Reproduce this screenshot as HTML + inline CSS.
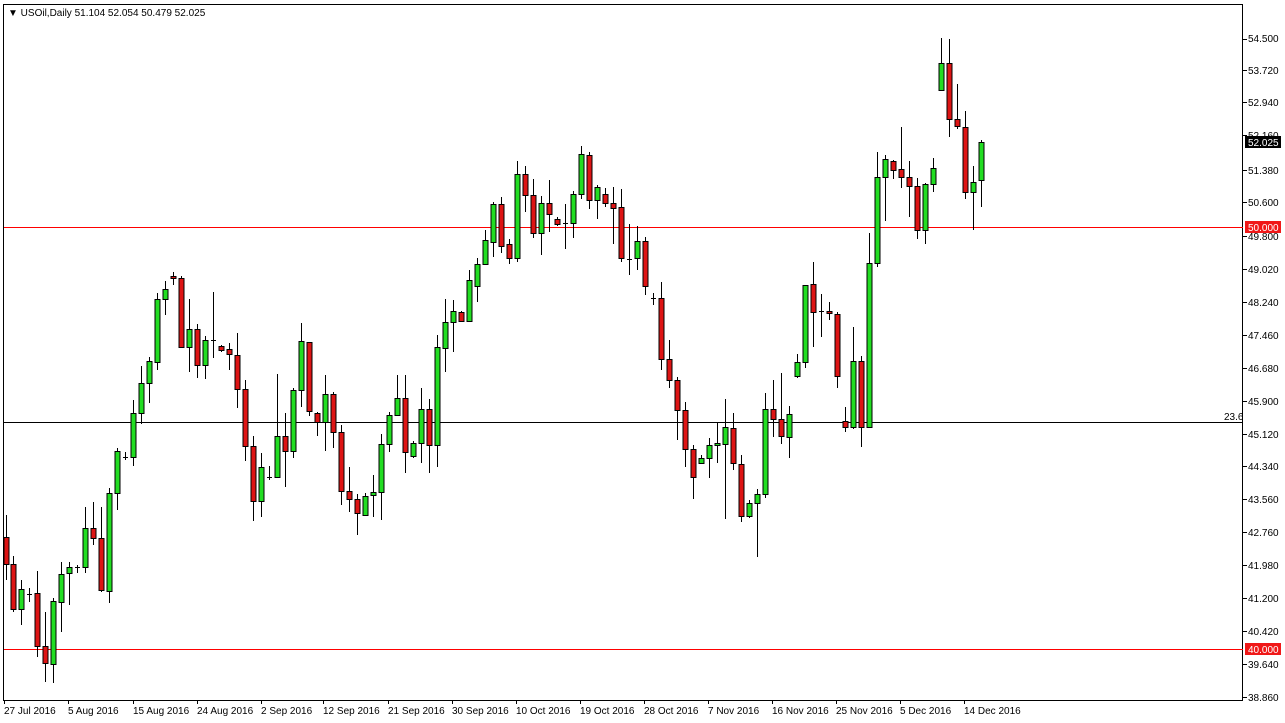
<!DOCTYPE html>
<html><head><meta charset="utf-8"><style>
html,body{margin:0;padding:0;background:#fff;width:1285px;height:723px;overflow:hidden}
svg{position:absolute;left:0;top:0}
text{font-family:"Liberation Sans",sans-serif;font-size:10px;fill:#000}
</style></head><body>
<svg id="s" width="1285" height="723" xmlns="http://www.w3.org/2000/svg">
<rect x="0" y="0" width="1285" height="723" fill="#fff"/>
<rect x="3.5" y="4.5" width="1239" height="696" fill="none" stroke="#000" stroke-width="1"/>
<rect x="4" y="227" width="1239" height="1" fill="#ff0000"/>
<rect x="4" y="649" width="1239" height="1" fill="#ff0000"/>
<rect x="4" y="422" width="1239" height="1" fill="#000"/>
<text x="1224" y="420">23.6</text>
<text x="8" y="16">▼ USOil,Daily  51.104 52.054 50.479 52.025</text>
<g id="c"></g>
<g id="ax"></g>
<rect x="1245" y="136" width="36" height="12" fill="#000"/>
<text x="1248" y="146" style="fill:#fff">52.025</text>
<rect x="1245" y="221" width="36" height="12" fill="#f01818"/>
<text x="1248" y="231" style="fill:#fff">50.000</text>
<rect x="1245" y="643" width="36" height="12" fill="#f01818"/>
<text x="1248" y="653" style="fill:#fff">40.000</text>
<text x="4" y="714">27 Jul 2016</text>
<text x="68" y="714">5 Aug 2016</text>
<text x="133" y="714">15 Aug 2016</text>
<text x="197" y="714">24 Aug 2016</text>
<text x="261" y="714">2 Sep 2016</text>
<text x="323" y="714">12 Sep 2016</text>
<text x="388" y="714">21 Sep 2016</text>
<text x="452" y="714">30 Sep 2016</text>
<text x="516" y="714">10 Oct 2016</text>
<text x="580" y="714">19 Oct 2016</text>
<text x="644" y="714">28 Oct 2016</text>
<text x="708" y="714">7 Nov 2016</text>
<text x="772" y="714">16 Nov 2016</text>
<text x="836" y="714">25 Nov 2016</text>
<text x="900" y="714">5 Dec 2016</text>
<text x="964" y="714">14 Dec 2016</text>
<text x="1248" y="42">54.500</text>
<text x="1248" y="74">53.720</text>
<text x="1248" y="106">52.940</text>
<text x="1248" y="139">52.160</text>
<text x="1248" y="174">51.380</text>
<text x="1248" y="206">50.600</text>
<text x="1248" y="240">49.800</text>
<text x="1248" y="273">49.020</text>
<text x="1248" y="306">48.240</text>
<text x="1248" y="339">47.460</text>
<text x="1248" y="372">46.680</text>
<text x="1248" y="405">45.900</text>
<text x="1248" y="438">45.120</text>
<text x="1248" y="470">44.340</text>
<text x="1248" y="503">43.560</text>
<text x="1248" y="536">42.760</text>
<text x="1248" y="569">41.980</text>
<text x="1248" y="602">41.200</text>
<text x="1248" y="635">40.420</text>
<text x="1248" y="668">39.640</text>
<text x="1248" y="701">38.860</text>
</svg>
<script>
var d=[
[6,515,580,537,564,'r'],[13,556,612,564,609,'r'],[21,580,625,589,609,'g'],[29,588,602,594,594,'d'],
[37,571,657,593,646,'r'],[45,612,682,646,663,'r'],[53,598,683,601,664,'g'],[61,562,632,574,602,'g'],
[69,562,605,567,573,'g'],[77,565,573,567,567,'d'],[85,507,573,528,567,'g'],[93,502,545,528,538,'r'],
[101,507,592,538,590,'r'],[109,488,603,493,591,'g'],[117,448,510,451,493,'g'],[125,452,460,457,457,'d'],
[133,400,466,413,457,'g'],[141,366,424,383,413,'g'],[149,357,403,361,383,'g'],[157,293,370,299,362,'g'],
[165,281,315,289,299,'g'],[173,272,285,276,278,'r'],[181,276,347,278,347,'r'],[189,299,372,329,347,'g'],
[197,324,378,329,365,'r'],[205,336,379,340,365,'g'],[213,292,358,340,340,'d'],[221,345,352,346,350,'r'],
[229,343,370,349,354,'r'],[237,333,408,355,389,'r'],[245,380,461,389,446,'r'],[253,436,521,446,501,'r'],
[261,453,517,467,501,'g'],[269,466,480,477,477,'d'],[277,374,478,436,477,'g'],[285,413,487,436,451,'r'],
[293,388,458,390,451,'g'],[301,323,407,341,390,'g'],[309,342,416,342,411,'r'],[317,412,436,413,422,'r'],
[325,375,451,394,422,'g'],[333,392,448,394,432,'r'],[341,425,505,432,491,'r'],[349,467,512,491,499,'r'],
[357,494,535,499,513,'r'],[365,493,515,496,515,'g'],[373,475,517,492,495,'g'],[381,434,520,444,492,'g'],
[389,412,452,415,444,'g'],[397,375,415,398,415,'g'],[405,375,473,398,452,'r'],[413,441,458,443,456,'g'],
[421,388,463,409,443,'g'],[429,399,473,409,445,'r'],[437,335,467,347,445,'g'],[445,299,372,322,348,'g'],
[453,300,352,311,322,'g'],[461,311,322,312,321,'r'],[469,270,321,280,321,'g'],[477,258,302,264,286,'g'],
[485,230,264,240,264,'g'],[493,202,257,204,242,'g'],[501,197,253,204,246,'r'],[509,239,264,244,258,'r'],
[517,161,262,174,258,'g'],[525,166,212,174,195,'r'],[533,179,238,195,233,'r'],[541,196,255,203,233,'g'],
[549,180,232,203,214,'r'],[557,217,226,219,224,'r'],[565,204,249,223,223,'d'],[573,191,238,194,223,'g'],
[581,146,199,154,194,'g'],[589,152,209,155,200,'r'],[597,185,219,187,200,'g'],[605,188,207,194,203,'r'],
[613,187,244,203,208,'r'],[621,189,262,207,258,'r'],[629,224,275,259,259,'d'],[637,226,270,241,258,'g'],
[645,237,295,241,286,'r'],[653,293,305,298,298,'d'],[661,282,370,298,359,'r'],[669,340,388,359,380,'r'],
[677,377,440,380,410,'r'],[685,402,467,410,449,'r'],[693,445,499,449,477,'r'],[701,455,463,458,463,'g'],
[709,438,478,445,458,'g'],[717,423,463,443,445,'g'],[725,399,519,427,444,'g'],[733,413,470,428,463,'r'],
[741,455,522,464,516,'r'],[749,500,518,503,516,'g'],[757,489,557,494,503,'g'],[765,393,498,409,494,'g'],
[773,380,437,409,419,'r'],[781,373,444,419,436,'r'],[789,406,458,414,437,'g'],[797,354,378,362,376,'g'],
[805,285,368,285,362,'g'],[813,262,347,284,312,'r'],[821,294,337,311,311,'d'],[829,302,320,311,313,'r'],
[837,312,388,314,376,'r'],[845,407,432,421,427,'r'],[853,327,429,361,427,'g'],[861,356,447,361,427,'r'],
[869,233,427,263,427,'g'],[877,152,267,177,263,'g'],[885,155,221,159,177,'g'],[893,160,179,161,170,'r'],
[901,127,188,169,177,'r'],[909,161,217,177,186,'r'],[917,178,239,186,230,'r'],[925,183,244,184,230,'g'],
[933,158,192,168,184,'g'],[941,38,90,63,90,'g'],[949,39,137,63,119,'r'],[957,84,129,119,126,'r'],
[965,111,199,127,192,'r'],[973,166,230,182,192,'g'],[981,140,207,142,180,'g']];
var s='';
d.forEach(function(c){
var x=c[0];
s+='<line x1="'+(x+.5)+'" y1="'+c[1]+'" x2="'+(x+.5)+'" y2="'+c[2]+'" stroke="#000"/>';
if(c[5]=='d'){s+='<line x1="'+(x-2)+'" y1="'+(c[3]+.5)+'" x2="'+(x+3)+'" y2="'+(c[3]+.5)+'" stroke="#000"/>';}
else{var h=Math.max(c[4]-c[3],1);s+='<rect x="'+(x-2)+'" y="'+(c[3]+.5)+'" width="5" height="'+h+'" fill="'+(c[5]=='g'?'#22dd22':'#dd1414')+'" stroke="#000"/>';}
});
var a='';
[39,70,102,135,170,202,236,269,302,335,368,401,434,466,499,532,565,598,631,664,697].forEach(function(y){a+='<line x1="1243" y1="'+(y+.5)+'" x2="1247" y2="'+(y+.5)+'" stroke="#000"/>';});
[4,68,133,197,261,323,388,452,516,580,644,708,772,836,900,964].forEach(function(x){a+='<line x1="'+(x+.5)+'" y1="700" x2="'+(x+.5)+'" y2="704" stroke="#000"/>';});
document.getElementById('c').innerHTML=s;
document.getElementById('ax').innerHTML=a;
</script>
</body></html>
